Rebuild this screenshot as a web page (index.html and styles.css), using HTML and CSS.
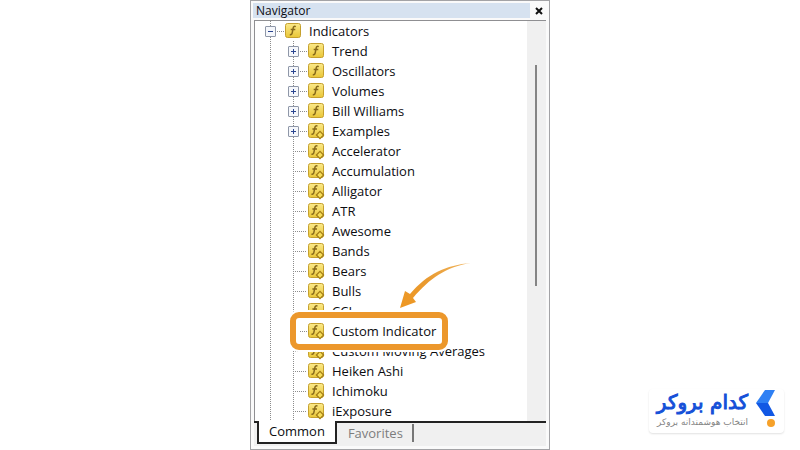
FILE: index.html
```html
<!DOCTYPE html>
<html lang="en">
<head>
    <meta charset="UTF-8">
    <meta name="viewport" content="width=device-width, initial-scale=1.0">
    <title>Navigator</title>
    <link rel="stylesheet" href="styles.css">
</head>
<body>

    <!-- Shared icons -->
    <svg class="sprite" aria-hidden="true">
        <defs>
            <linearGradient id="gold" x1="0" y1="0" x2="0" y2="1">
                <stop offset="0" stop-color="#fbe989"/>
                <stop offset="1" stop-color="#e9c637"/>
            </linearGradient>
            <linearGradient id="swoosh" x1="1" y1="0" x2="0" y2="1">
                <stop offset="0" stop-color="#f0b45c"/>
                <stop offset="0.5" stop-color="#e99a30"/>
                <stop offset="1" stop-color="#ee9722"/>
            </linearGradient>
        </defs>
        <symbol id="icon-group" viewBox="0 0 18 18">
            <rect x="1.5" y="1.5" width="15" height="14" rx="2" fill="url(#gold)" stroke="#c5a02e"/>
            <path d="M11.8 4.6C10.1 3.9 9.4 4.8 9.1 6.3L8.2 10.8C7.9 12.4 7.2 13 5.8 12.5M6.7 7.4H11.3" fill="none" stroke="#86691b" stroke-width="1.5"/>
        </symbol>
        <symbol id="icon-item" viewBox="0 0 18 18">
            <rect x="1.5" y="1.5" width="15" height="14" rx="2" fill="url(#gold)" stroke="#c5a02e"/>
            <path d="M10.5 4.1C8.8 3.4 8.1 4.3 7.8 5.8L6.9 10.3C6.6 11.9 5.9 12.5 4.5 12M5.4 6.9H10" fill="none" stroke="#86691b" stroke-width="1.5"/>
            <path d="M13 9.4L16.6 13L13 16.6L9.4 13Z" fill="#f7dd58" stroke="#a17b16" stroke-width="1.2"/>
        </symbol>
    </svg>

    <section class="navigator">
        <header class="title-bar">
            <h1 class="title">Navigator</h1>
            <button class="close-button" aria-label="Close">
                <svg viewBox="0 0 8 8" width="8" height="8"><path d="M1 1L7 7M7 1L1 7" stroke="#111" stroke-width="2"/></svg>
            </button>
        </header>

        <div class="panel">
            <div class="tree">
                <div class="row root">
                    <button class="toggle open" aria-label="Collapse Indicators"></button>
                    <span class="branch"></span>
                    <svg class="icon"><use href="#icon-group"/></svg>
                    <span class="label">Indicators</span>
                </div>
                <ul class="children">
                    <li class="row"><button class="toggle" aria-label="Expand Trend"></button><span class="branch"></span><svg class="icon"><use href="#icon-group"/></svg><span class="label">Trend</span></li>
                    <li class="row"><button class="toggle" aria-label="Expand Oscillators"></button><span class="branch"></span><svg class="icon"><use href="#icon-group"/></svg><span class="label">Oscillators</span></li>
                    <li class="row"><button class="toggle" aria-label="Expand Volumes"></button><span class="branch"></span><svg class="icon"><use href="#icon-group"/></svg><span class="label">Volumes</span></li>
                    <li class="row"><button class="toggle" aria-label="Expand Bill Williams"></button><span class="branch"></span><svg class="icon"><use href="#icon-group"/></svg><span class="label">Bill Williams</span></li>
                    <li class="row"><button class="toggle" aria-label="Expand Examples"></button><span class="branch"></span><svg class="icon"><use href="#icon-item"/></svg><span class="label">Examples</span></li>
                    <li class="row leaf"><span class="branch"></span><svg class="icon"><use href="#icon-item"/></svg><span class="label">Accelerator</span></li>
                    <li class="row leaf"><span class="branch"></span><svg class="icon"><use href="#icon-item"/></svg><span class="label">Accumulation</span></li>
                    <li class="row leaf"><span class="branch"></span><svg class="icon"><use href="#icon-item"/></svg><span class="label">Alligator</span></li>
                    <li class="row leaf"><span class="branch"></span><svg class="icon"><use href="#icon-item"/></svg><span class="label">ATR</span></li>
                    <li class="row leaf"><span class="branch"></span><svg class="icon"><use href="#icon-item"/></svg><span class="label">Awesome</span></li>
                    <li class="row leaf"><span class="branch"></span><svg class="icon"><use href="#icon-item"/></svg><span class="label">Bands</span></li>
                    <li class="row leaf"><span class="branch"></span><svg class="icon"><use href="#icon-item"/></svg><span class="label">Bears</span></li>
                    <li class="row leaf"><span class="branch"></span><svg class="icon"><use href="#icon-item"/></svg><span class="label">Bulls</span></li>
                    <li class="row leaf"><span class="branch"></span><svg class="icon"><use href="#icon-item"/></svg><span class="label">CCI</span></li>
                    <li class="row leaf highlighted">
                        <span class="branch"></span><svg class="icon"><use href="#icon-item"/></svg><span class="label">Custom Indicator</span>
                        <svg class="pointer" viewBox="0 0 72 46" aria-hidden="true"><path d="M71 0C46 2 27 11 10 31L5 28L0 45L16 39L13 35C30 15 46 4 71 0Z" fill="url(#swoosh)"/></svg>
                    </li>
                    <li class="row leaf"><span class="branch"></span><svg class="icon"><use href="#icon-item"/></svg><span class="label">Custom Moving Averages</span></li>
                    <li class="row leaf"><span class="branch"></span><svg class="icon"><use href="#icon-item"/></svg><span class="label">Heiken Ashi</span></li>
                    <li class="row leaf"><span class="branch"></span><svg class="icon"><use href="#icon-item"/></svg><span class="label">Ichimoku</span></li>
                    <li class="row leaf"><span class="branch"></span><svg class="icon"><use href="#icon-item"/></svg><span class="label">iExposure</span></li>
                </ul>
            </div>
            <div class="scroll-track"><div class="scroll-thumb"></div></div>
        </div>

        <div class="tabs" role="tablist">
            <button class="tab active" role="tab" aria-selected="true">Common</button>
            <button class="tab" role="tab" aria-selected="false">Favorites</button>
        </div>
    </section>

    <a href="#" class="brand" lang="fa" dir="rtl">
        <svg class="brand-mark" viewBox="0 0 20 38" width="20" height="38" aria-hidden="true">
            <path d="M9 0H19L12 13H0Z" fill="#2f80f4"/>
            <path d="M0 13H12L19 26H9Z" fill="#1258e4"/>
            <circle cx="15" cy="33" r="4" fill="#f6a12a"/>
        </svg>
        <span class="brand-text">
            <strong class="brand-name">کدام بروکر</strong>
            <span class="brand-tagline">انتخاب هوشمندانه بروکر</span>
        </span>
    </a>

</body>
</html>
```

FILE: styles.css
```css
:root {
    --text-color: #0c0c10;
    --frame-color: #a3a3a6;
    --face-color: #f0f0f0;
    --line-color: #8c8c8c;
    --accent-color: #ec972b;
    --ui-font: "Open Sans", "Noto Sans", sans-serif;
}

*,
*::before {
    box-sizing: border-box;
}

body {
    margin: 0;
    min-height: 100vh;
    position: relative;
    background: #fff;
    color: var(--text-color);
    font-family: var(--ui-font);
    font-size: 13px;
}

button {
    padding: 0;
    border: 0;
    background: none;
    color: inherit;
    font: inherit;
    cursor: pointer;
}

.sprite {
    display: block;
    width: 0;
    height: 0;
}

.navigator {
    width: 100%;
    max-width: 300px;
    margin: 0 auto;
    padding: 2px 3px 3px 2px;
    border: 1px solid var(--frame-color);
    background: #fafafa;
}

/* Title bar */
.title-bar {
    display: flex;
    height: 16px;
    margin-bottom: 1px;
    background: linear-gradient(#d6e2f0, #d6e2f0) no-repeat;
    background-size: calc(100% - 16px) 15px;
}

.title {
    flex: 1;
    margin: 0;
    padding-left: 3px;
    font-size: 12px;
    font-weight: 400;
    line-height: 15px;
}

.close-button {
    display: flex;
    align-items: center;
    justify-content: center;
    width: 14px;
}

/* Tree */
.panel {
    display: flex;
    margin-left: 1px;
    border-top: 1px solid #8f8f92;
    border-left: 1px solid #8f8f92;
    background: #fff;
}

.tree {
    flex: 1;
    min-width: 0;
    padding-left: 10px;
    background: repeating-linear-gradient(var(--line-color) 0 1px, transparent 1px 2px) 15px 0 / 1px 100% no-repeat;
}

.children {
    margin: 0;
    padding: 0 0 0 23px;
    list-style: none;
    background: repeating-linear-gradient(var(--line-color) 0 1px, transparent 1px 2px) 28px 0 / 1px 100% no-repeat;
}

.row {
    display: flex;
    align-items: center;
    height: 20px;
    white-space: nowrap;
}

.toggle {
    width: 11px;
    height: 11px;
    border: 1px solid #8f97a8;
    border-radius: 1px;
    background:
        linear-gradient(#2b4590, #2b4590) center / 5px 1px no-repeat,
        linear-gradient(#2b4590, #2b4590) center / 1px 5px no-repeat,
        #f5f7fb;
}

.toggle.open {
    background:
        linear-gradient(#2b4590, #2b4590) center / 5px 1px no-repeat,
        #f5f7fb;
}

.branch {
    width: 8px;
    height: 1px;
    background: repeating-linear-gradient(90deg, transparent 0 1px, var(--line-color) 1px 2px);
}

.leaf .branch {
    width: 13px;
    margin-left: 6px;
}

.icon {
    width: 18px;
    height: 18px;
}

.label {
    margin-left: 7px;
    line-height: 20px;
}

/* Framed row, drawn over its neighbours */
.highlighted {
    position: relative;
    z-index: 1;
}

.highlighted::before {
    content: "";
    position: absolute;
    z-index: -1;
    top: -9px;
    left: 2px;
    width: 158px;
    height: 38px;
    border: 6px solid var(--accent-color);
    border-radius: 9px;
    background: #fff;
    box-shadow: 0 0 0 2px #fff;
}

.highlighted .branch {
    width: 8px;
    margin-left: 11px;
}

.pointer {
    position: absolute;
    left: 112px;
    bottom: 32px;
    width: 72px;
    height: 46px;
}

.scroll-track {
    width: 19px;
    padding: 44px 0 0 8px;
    background: var(--face-color);
}

.scroll-thumb {
    width: 2px;
    height: 62%;
    background: #858585;
}

/* Tabs */
.tabs {
    display: flex;
    align-items: flex-start;
    margin-left: 1px;
    padding: 0 0 2px 3px;
    border-top: 2px solid #222;
    background: var(--face-color);
}

.tab {
    height: 18px;
    margin-top: 1px;
    padding: 0 9px 0 11px;
    border-right: 2px solid #777;
    color: #7d7d7d;
    line-height: 16px;
}

.tab.active {
    height: 23px;
    margin-top: -2px;
    padding: 0 10px 1px;
    border: 2px solid #222;
    border-top: 0;
    background: #fff;
    color: var(--text-color);
}

/* Brand badge */
.brand {
    position: absolute;
    right: 16px;
    bottom: 17px;
    display: flex;
    align-items: center;
    gap: 8px;
    padding: 0 8px 4px;
    border-radius: 4px;
    background: #fff;
    box-shadow: 0 1px 2px rgba(0, 0, 0, 0.12);
    text-decoration: none;
}

.brand-text {
    display: flex;
    flex-direction: column;
}

.brand-name {
    color: #1550d8;
    font-family: "DejaVu Sans", sans-serif;
    font-size: 20px;
    font-weight: 400;
    line-height: 26px;
    -webkit-text-stroke: 1px #1550d8;
}

.brand-tagline {
    color: #858585;
    font-family: "DejaVu Sans", sans-serif;
    font-size: 9px;
    line-height: 14px;
}
```
